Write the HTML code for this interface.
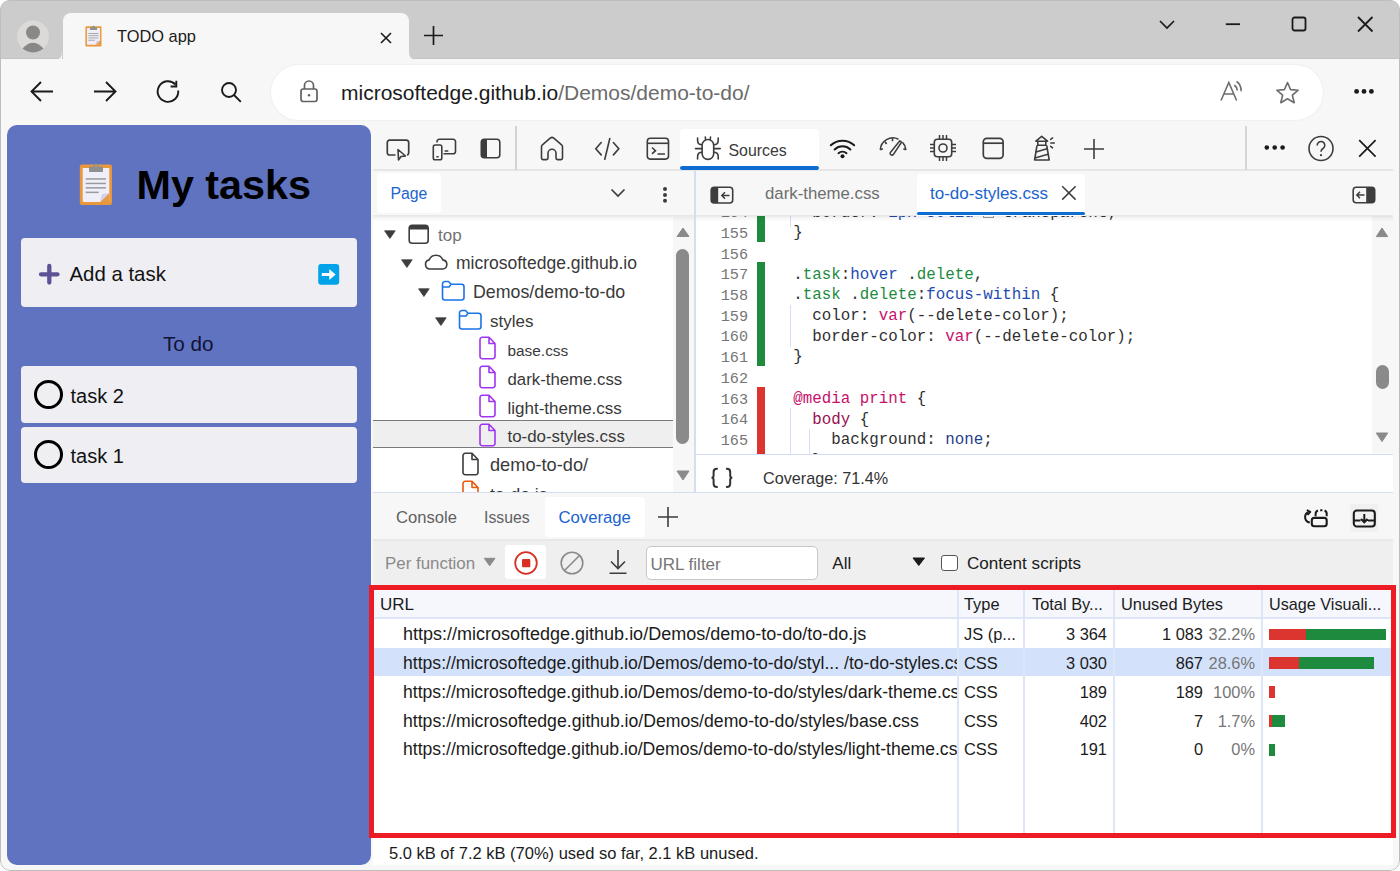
<!DOCTYPE html>
<html><head><meta charset="utf-8">
<style>
*{box-sizing:border-box;margin:0;padding:0}
html,body{width:1400px;height:871px;overflow:hidden;background:#fff;font-family:"Liberation Sans",sans-serif;color:#1b1b1b}
.a{position:absolute;white-space:nowrap}
svg{position:absolute;overflow:visible}
#win{position:absolute;left:0;top:0;width:1400px;height:871px;border-radius:10px;background:#f7f7f7;overflow:hidden}
#frame{position:absolute;left:0;top:0;width:1400px;height:871px;border-radius:10px;border:1px solid #bdbdbd;pointer-events:none}
#titlebar{position:absolute;left:0;top:0;width:1400px;height:59px;background:#cccccc;border-bottom:1px solid #c4c4c4}
#tab{position:absolute;left:62.5px;top:13px;width:346.5px;height:47px;background:#f7f7f7;border-radius:8px 8px 0 0}
#addr{position:absolute;left:271px;top:65px;width:1052px;height:55px;background:#fff;border-radius:28px;box-shadow:0 0 2px rgba(0,0,0,.10)}
#panel{position:absolute;left:7px;top:125px;width:363.5px;height:740px;background:#5f73c1;border-radius:10px}
#dt{position:absolute;left:373px;top:125px;width:1020px;height:740px;background:#fff;overflow:hidden}
.cg{color:#1e8a3e}.cb{color:#1e4bb0}.cm{color:#c8106a}.cd{color:#990f50}.cn{color:#1f3e8c}
.card{position:absolute;left:14px;width:336px;background:#eeeef3;border-radius:4px}
</style></head><body>
<div id="win">
  <div id="titlebar"></div>
  <!-- avatar -->
  <svg style="left:0;top:0" width="60" height="60">
    <circle cx="33" cy="36.6" r="16" fill="#dcdad7"/>
    <circle cx="33" cy="32.5" r="7" fill="#8a8886"/>
    <path d="M22.5 48.5 Q33 37 43.5 48.5 Q38.5 52.6 33 52.6 Q27.5 52.6 22.5 48.5Z" fill="#8a8886"/>
  </svg>
  <div id="tab"></div>
  <!-- tab flares -->
  <svg style="left:54px;top:50px" width="10" height="10"><path d="M0 10 Q8 10 8 2 L8 10Z" fill="#f7f7f7"/></svg>
  <svg style="left:409px;top:50px" width="10" height="10"><path d="M0 2 Q0 10 8 10 L0 10Z" fill="#f7f7f7"/></svg>
  <!-- tab favicon -->
  <svg style="left:84.6px;top:25.1px" width="17" height="22" viewBox="0 0 34 44">
    <rect x="0.8" y="2.6" width="32.2" height="40.3" rx="2.5" fill="#e8983a"/>
    <rect x="3.9" y="6.1" width="26.2" height="33.6" rx="0.8" fill="#f0eef8"/>
    <path d="M30.1 31 L30.1 39.7 L21.2 39.7Z" fill="#e49a48"/>
    <path d="M21.2 39.7 L30.1 31 L23 32.2Z" fill="#d3cfe4"/>
    <rect x="10" y="4.5" width="14" height="5.6" rx="1.2" fill="#8f9090"/>
    <circle cx="17" cy="4" r="2.6" fill="#8f9090"/>
    <rect x="6.7" y="16" width="20.3" height="1.8" fill="#a0a0a0"/>
    <rect x="6.7" y="20.5" width="20.3" height="1.8" fill="#a0a0a0"/>
    <rect x="6.7" y="25" width="20.3" height="1.8" fill="#a0a0a0"/>
    <rect x="6.7" y="29.5" width="13" height="1.8" fill="#a0a0a0"/>
  </svg>
  <div class="a" style="left:117px;top:27.2px;font-size:16.4px;color:#1b1b1b">TODO app</div>
  <svg style="left:380px;top:32px" width="12" height="12"><path d="M1 1 L11 11 M11 1 L1 11" stroke="#1b1b1b" stroke-width="1.6"/></svg>
  <svg style="left:423px;top:25px" width="21" height="21"><path d="M10.5 1 V20 M1 10.5 H20" stroke="#1b1b1b" stroke-width="1.7"/></svg>
  <!-- window controls -->
  <svg style="left:1158.5px;top:19.5px" width="17" height="10"><path d="M1 1 L8 8 L15 1" stroke="#1b1b1b" stroke-width="1.7" fill="none"/></svg>
  <svg style="left:1225px;top:21.5px" width="16" height="4"><path d="M0.8 2.2 H15" stroke="#1b1b1b" stroke-width="1.8"/></svg>
  <svg style="left:1291px;top:16px" width="17" height="17"><rect x="1.5" y="1.5" width="13" height="13" rx="2" stroke="#1b1b1b" stroke-width="1.8" fill="none"/></svg>
  <svg style="left:1357px;top:16px" width="17" height="17"><path d="M1 1 L15.5 15.5 M15.5 1 L1 15.5" stroke="#1b1b1b" stroke-width="1.8"/></svg>

  <!-- nav toolbar -->
  <svg style="left:30px;top:81.3px" width="25" height="22"><path d="M1.5 10.5 H23 M11 1 L1.5 10.5 L11 20" stroke="#1b1b1b" stroke-width="1.9" fill="none"/></svg>
  <svg style="left:91.5px;top:81px" width="25" height="22"><path d="M23.5 10.5 H2 M14 1 L23.5 10.5 L14 20" stroke="#1b1b1b" stroke-width="1.9" fill="none"/></svg>
  <svg style="left:156px;top:80px" width="26" height="26"><path d="M22.2 10.5 A10.3 10.3 0 1 1 19.5 4.5" stroke="#1b1b1b" stroke-width="1.9" fill="none"/><path d="M20.3 0.8 V6.5 H14.6" stroke="#1b1b1b" stroke-width="1.9" fill="none"/></svg>
  <svg style="left:219.5px;top:81px" width="23" height="23"><circle cx="9" cy="9" r="7" stroke="#1b1b1b" stroke-width="1.9" fill="none"/><path d="M14 14 L20.8 20.8" stroke="#1b1b1b" stroke-width="1.9"/></svg>
  <div id="addr"></div>
  <svg style="left:298.5px;top:79px" width="20" height="25"><path d="M5.5 10 V6.5 A4.5 4.5 0 0 1 14.5 6.5 V10" stroke="#616161" stroke-width="1.7" fill="none"/><rect x="2" y="10" width="16" height="12.5" rx="2.2" stroke="#616161" stroke-width="1.7" fill="none"/><circle cx="10" cy="16.2" r="1.2" fill="#616161"/></svg>
  <div class="a" style="left:341px;top:80.8px;font-size:21px;color:#1b1b1b">microsoftedge.github.io<span style="color:#6b6b6b">/Demos/demo-to-do/</span></div>
  <svg style="left:1219px;top:80.2px" width="26" height="24"><path d="M2 20.5 L9.8 2.5 L17.6 20.5 M4.8 14 H14.8" stroke="#6d6d6d" stroke-width="1.6" fill="none"/><path d="M15.3 5 Q18 7 18.3 10.5 M17.5 1.5 Q22.2 4.5 22.2 11.3" stroke="#6d6d6d" stroke-width="1.6" fill="none"/></svg>
  <svg style="left:1275px;top:81px" width="26" height="24"><path d="M12.5 1.5 L15.6 8.6 L23.2 9.2 L17.4 14.2 L19.2 21.7 L12.5 17.7 L5.8 21.7 L7.6 14.2 L1.8 9.2 L9.4 8.6Z" stroke="#6d6d6d" stroke-width="1.6" fill="none" stroke-linejoin="round"/></svg>
  <svg style="left:1352px;top:87px" width="24" height="9"><circle cx="4.6" cy="4.4" r="2.4" fill="#1b1b1b"/><circle cx="12" cy="4.4" r="2.4" fill="#1b1b1b"/><circle cx="19.4" cy="4.4" r="2.4" fill="#1b1b1b"/></svg>

  <!-- page panel -->
  <div id="panel">
    <svg style="left:72px;top:37px" width="34" height="44" viewBox="0 0 34 44">
      <rect x="0.8" y="2.6" width="32.2" height="40.3" rx="2.2" fill="#e8983a"/>
      <rect x="3.7" y="5.9" width="26.6" height="34" rx="0.8" fill="#f0eef8"/>
      <path d="M30.3 31 L30.3 39.9 L21.2 39.9Z" fill="#e49a48"/>
      <path d="M21.2 39.9 L30.3 31 L23 32.2Z" fill="#d3cfe4"/>
      <rect x="10" y="4.5" width="14" height="5.6" rx="1.2" fill="#8f9090"/>
      <circle cx="17" cy="4" r="2.6" fill="#8f9090"/>
      <circle cx="17" cy="4.2" r="1.1" fill="#f0932e"/>
      <rect x="6.7" y="16.2" width="20.3" height="1.5" fill="#9b9b9b"/>
      <rect x="6.7" y="20.7" width="20.3" height="1.5" fill="#9b9b9b"/>
      <rect x="6.7" y="25.1" width="20.3" height="1.5" fill="#9b9b9b"/>
      <rect x="6.7" y="29.6" width="13" height="1.5" fill="#9b9b9b"/>
    </svg>
    <div class="a" style="left:129.5px;top:36.5px;font-size:41.3px;font-weight:bold;color:#000">My tasks</div>
    <div class="card" style="top:113px;height:69px">
      <svg style="left:18px;top:26px" width="21" height="21"><path d="M10.3 2 V18.5 M2 10.3 H18.5" stroke="#5e5296" stroke-width="4.3" stroke-linecap="round"/></svg>
      <div class="a" style="left:48.5px;top:25px;font-size:20.4px;color:#111">Add a task</div>
      <svg style="left:297px;top:26px" width="22" height="21"><rect x="0.2" y="0" width="21" height="20.8" rx="3" fill="#03a3e9"/><path d="M3.8 10.5 H13" stroke="#fff" stroke-width="3" /><path d="M11.6 5.7 L17.3 10.5 L11.6 15.4Z" fill="#fff" stroke="#fff" stroke-width="0.6" stroke-linejoin="round"/></svg>
    </div>
    <div class="a" style="left:156px;top:207px;font-size:20.7px;color:#121233">To do</div>
    <div class="card" style="top:241px;height:57px">
      <svg style="left:13px;top:14px" width="30" height="30"><circle cx="14.5" cy="14.5" r="13" stroke="#000" stroke-width="3" fill="none"/></svg>
      <div class="a" style="left:49.5px;top:19px;font-size:20px;color:#111">task 2</div>
    </div>
    <div class="card" style="top:302px;height:56px">
      <svg style="left:13px;top:13px" width="30" height="30"><circle cx="14.5" cy="14.5" r="13" stroke="#000" stroke-width="3" fill="none"/></svg>
      <div class="a" style="left:49.5px;top:18px;font-size:20px;color:#111">task 1</div>
    </div>
  </div>

  <!-- devtools -->
  <div id="dt"></div>
  <!-- devtools main toolbar -->
  <div class="a" style="left:373px;top:125px;width:1020px;height:46px;background:#f7f7f7;border-bottom:2px solid #e6e6e6"></div>
  <div class="a" style="left:515px;top:126px;width:2px;height:44px;background:#d3d3d3"></div>
  <div class="a" style="left:1245px;top:126px;width:2px;height:44px;background:#d6d6d6"></div>
  <div class="a" style="left:680px;top:129px;width:139px;height:41px;background:#fff;border-radius:4px 4px 0 0"></div>
  <div class="a" style="left:680px;top:165.5px;width:139px;height:4px;background:#0f6cd0;border-radius:2px"></div>
  <!-- inspect -->
  <svg style="left:385.8px;top:139.3px" width="26" height="23"><path d="M9.5 16 H3.5 A2.2 2.2 0 0 1 1.3 13.8 V3.4 A2.2 2.2 0 0 1 3.5 1.2 H20.5 A2.2 2.2 0 0 1 22.7 3.4 V13.8 A2.2 2.2 0 0 1 21 16" stroke="#3d3d3d" stroke-width="1.7" fill="none"/><path d="M12 10.5 L12.5 21 L15 17.5 L19.5 17 Z" stroke="#3d3d3d" stroke-width="1.6" fill="none" stroke-linejoin="round"/></svg>
  <!-- device -->
  <svg style="left:431.7px;top:137.9px" width="25" height="23"><path d="M5 4.5 V3.5 A2.2 2.2 0 0 1 7.2 1.3 H21.3 A2.2 2.2 0 0 1 23.5 3.5 V13.6 A2.2 2.2 0 0 1 21.3 15.8 H11.5" stroke="#3d3d3d" stroke-width="1.6" fill="none"/><rect x="1.3" y="7" width="8.5" height="14.8" rx="1.8" stroke="#3d3d3d" stroke-width="1.6" fill="none"/><path d="M4.4 18.8 H6.7 M12.6 13 H16.3" stroke="#3d3d3d" stroke-width="1.6"/></svg>
  <!-- dock -->
  <svg style="left:479.5px;top:137.9px" width="22" height="22"><rect x="1.3" y="1.3" width="18.5" height="18.5" rx="3" stroke="#3d3d3d" stroke-width="1.6" fill="none"/><path d="M1.3 4.3 A3 3 0 0 1 4.3 1.3 H7 V19.8 H4.3 A3 3 0 0 1 1.3 16.8Z" fill="#3d3d3d"/></svg>
  <!-- home -->
  <svg style="left:539.7px;top:135.5px" width="26" height="26"><path d="M3 23.6 A1.5 1.5 0 0 1 1.5 22.1 V10.8 A2.5 2.5 0 0 1 2.4 8.8 L10.5 2 A2.5 2.5 0 0 1 13.5 2 L21.6 8.8 A2.5 2.5 0 0 1 22.5 10.8 V22.1 A1.5 1.5 0 0 1 21 23.6 H17.5 A1.5 1.5 0 0 1 16 22.1 V17.3 A4 4 0 0 0 8 17.3 V22.1 A1.5 1.5 0 0 1 6.5 23.6Z" stroke="#3d3d3d" stroke-width="1.6" fill="none"/></svg>
  <!-- elements -->
  <svg style="left:593.5px;top:137px" width="28" height="24"><path d="M7.2 5.5 L1.8 11.7 L7.2 17.9 M19.4 5.5 L24.8 11.7 L19.4 17.9 M15.8 1.5 L10.8 22.2" stroke="#3d3d3d" stroke-width="1.6" fill="none" stroke-linecap="round"/></svg>
  <!-- console -->
  <svg style="left:645.6px;top:137.2px" width="25" height="24"><rect x="1.3" y="1.3" width="21.2" height="20.8" rx="3" stroke="#3d3d3d" stroke-width="1.6" fill="none"/><path d="M1.3 6.3 H22.5" stroke="#3d3d3d" stroke-width="1.6"/><path d="M6 10.5 L9.5 13.7 L6 16.9 M11.5 17 H19" stroke="#3d3d3d" stroke-width="1.6" fill="none"/></svg>
  <!-- sources bug -->
  <svg style="left:694px;top:135px" width="28" height="27"><rect x="8.1" y="4.5" width="11.6" height="19.9" rx="5.8" stroke="#3d3d3d" stroke-width="1.6" fill="none"/><path d="M11.6 4.8 L11.3 2 M16.2 4.8 L16.5 2 M8.1 9.8 Q3.6 9.8 3.6 5.5 V3 M19.7 9.8 Q24.2 9.8 24.2 5.5 V3 M1.5 13.6 H8.1 M19.7 13.6 H26.2 M8.1 17.3 Q3.6 17.3 3.6 21.5 V24 M19.7 17.3 Q24.2 17.3 24.2 21.5 V24" stroke="#3d3d3d" stroke-width="1.6" fill="none" stroke-linecap="round"/></svg>
  <div class="a" style="left:728.5px;top:141.5px;font-size:15.9px;color:#3b3b3b">Sources</div>
  <!-- network wifi -->
  <svg style="left:829px;top:136.8px" width="28" height="22"><path d="M1.8 8.3 A17 17 0 0 1 25.2 8.3 M5.6 12.5 A11.5 11.5 0 0 1 21.4 12.5 M9.5 16.2 A6 6 0 0 1 17.5 16.2" stroke="#1b1b1b" stroke-width="2" fill="none" stroke-linecap="round"/><circle cx="13.5" cy="19.2" r="2" fill="#1b1b1b"/></svg>
  <!-- performance -->
  <svg style="left:879px;top:137px" width="30" height="21"><path d="M1.3 12.8 A12.6 12.6 0 0 1 19.5 2.2 M23.5 5.2 A12.6 12.6 0 0 1 26.9 12.8" stroke="#3d3d3d" stroke-width="1.6" fill="none"/><path d="M1.3 12.8 L3.8 11.8 M13.5 1.2 V4.2 M6 4.8 L7.6 7 M26.9 12.8 L24.4 11.8" stroke="#3d3d3d" stroke-width="1.6" fill="none"/><path d="M20.8 3.8 L22.6 5 L14.3 17.6 A1.9 1.9 0 0 1 11.2 15.7Z" stroke="#3d3d3d" stroke-width="1.5" fill="none" stroke-linejoin="round"/></svg>
  <!-- memory -->
  <svg style="left:928.5px;top:134px" width="28" height="28"><rect x="5.3" y="5.3" width="17.4" height="17.4" rx="3" stroke="#3d3d3d" stroke-width="1.6" fill="none"/><circle cx="14" cy="14" r="4" stroke="#3d3d3d" stroke-width="1.6" fill="none"/><path d="M10.5 1 V5 M14 1 V5 M17.5 1 V5 M10.5 23 V27 M14 23 V27 M17.5 23 V27 M1 10.5 H5 M1 14 H5 M1 17.5 H5 M23 10.5 H27 M23 14 H27 M23 17.5 H27" stroke="#3d3d3d" stroke-width="1.5"/></svg>
  <!-- application -->
  <svg style="left:982px;top:137.1px" width="24" height="24"><rect x="1.3" y="1.3" width="19.8" height="20" rx="3.5" stroke="#3d3d3d" stroke-width="1.7" fill="none"/><path d="M1.3 6.2 H21.1" stroke="#3d3d3d" stroke-width="1.7"/></svg>
  <!-- lighthouse -->
  <svg style="left:1032px;top:134.2px" width="24" height="28"><path d="M3.9 7.2 L9.7 2.3 L15.5 7.2Z M5.8 7.2 V11.3 H13.8 V7.2 M5 11.3 L2.6 26 H17.2 L14.7 11.3" stroke="#3d3d3d" stroke-width="1.6" fill="none" stroke-linejoin="round"/><path d="M4 18 L15.8 14.6 M3 24 L16.8 20" stroke="#3d3d3d" stroke-width="1.6"/><path d="M18.6 5.4 L20.6 3.9 M18.8 9 H22.3 M18.6 12.3 L20.6 13.9" stroke="#3d3d3d" stroke-width="1.5" stroke-linecap="round"/></svg>
  <!-- plus -->
  <svg style="left:1083px;top:138px" width="22" height="22"><path d="M11 1 V21 M1 11 H21" stroke="#3d3d3d" stroke-width="1.6"/></svg>
  <!-- more -->
  <svg style="left:1262.5px;top:144.2px" width="24" height="8"><circle cx="3.8" cy="3.5" r="2.3" fill="#1b1b1b"/><circle cx="11.7" cy="3.5" r="2.3" fill="#1b1b1b"/><circle cx="19.6" cy="3.5" r="2.3" fill="#1b1b1b"/></svg>
  <!-- help -->
  <svg style="left:1307.2px;top:135.3px" width="28" height="28"><circle cx="14" cy="13.5" r="12" stroke="#3d3d3d" stroke-width="1.6" fill="none"/><path d="M10.2 10.5 A3.8 3.8 0 1 1 16.3 13.3 Q14 14.5 14 16.8" stroke="#3d3d3d" stroke-width="1.6" fill="none"/><circle cx="14" cy="20.2" r="1.1" fill="#3d3d3d"/></svg>
  <!-- close -->
  <svg style="left:1358px;top:139px" width="20" height="20"><path d="M1.2 1.2 L17.6 17.6 M17.6 1.2 L1.2 17.6" stroke="#1b1b1b" stroke-width="1.7"/></svg>

  <!-- sources sub tab rows -->
  <div class="a" style="left:373px;top:171px;width:1020px;height:45px;background:#f7f7f7;border-bottom:1px solid #e8e8e8"></div>
  <div class="a" style="left:376.5px;top:173px;width:64px;height:40px;background:#fff;border-radius:4px"></div>
  <div class="a" style="left:390.5px;top:184.5px;font-size:15.8px;color:#1a63d0">Page</div>
  <svg style="left:610px;top:188px" width="16" height="10"><path d="M1.5 1.5 L8 8 L14.5 1.5" stroke="#3d3d3d" stroke-width="1.7" fill="none"/></svg>
  <svg style="left:662px;top:186px" width="6" height="20"><circle cx="3" cy="3.1" r="2" fill="#3d3d3d"/><circle cx="3" cy="8.9" r="2" fill="#3d3d3d"/><circle cx="3" cy="14.7" r="2" fill="#3d3d3d"/></svg>
  
  <svg style="left:709.7px;top:185.7px" width="26" height="20"><rect x="1.2" y="1.2" width="21.5" height="15.8" rx="3" stroke="#3d3d3d" stroke-width="1.6" fill="none"/><path d="M1.2 4.2 A3 3 0 0 1 4.2 1.2 H8.2 V17 H4.2 A3 3 0 0 1 1.2 14Z" fill="#3d3d3d"/><path d="M19.5 9.5 H12 M15 6.3 L11.8 9.5 L15 12.7" stroke="#3d3d3d" stroke-width="1.5" fill="none"/></svg>
  <div class="a" style="left:765px;top:184px;font-size:16.8px;color:#6e6e6e">dark-theme.css</div>
  <div class="a" style="left:917px;top:174px;width:168px;height:42px;background:#fff;border-radius:4px 4px 0 0"></div>
  <div class="a" style="left:917px;top:211.5px;width:168px;height:3.5px;background:#0f6cd0;border-radius:2px"></div>
  <div class="a" style="left:930px;top:184px;font-size:17px;color:#1a63d0">to-do-styles.css</div>
  <svg style="left:1061px;top:185px" width="17" height="17"><path d="M1.2 1.2 L14.6 14.6 M14.6 1.2 L1.2 14.6" stroke="#3d3d3d" stroke-width="1.5"/></svg>
  <svg style="left:1352px;top:185.5px" width="26" height="20"><rect x="1.2" y="1.2" width="21.5" height="15.5" rx="3" stroke="#3d3d3d" stroke-width="1.6" fill="none"/><path d="M22.7 4.2 A3 3 0 0 0 19.7 1.2 H14.2 V16.7 H19.7 A3 3 0 0 0 22.7 13.7Z" fill="#3d3d3d"/><path d="M12.5 9 H5 M8 5.8 L4.8 9 L8 12.2" stroke="#3d3d3d" stroke-width="1.5" fill="none"/></svg>
  <!-- TREE -->
  <div class="a" style="left:373px;top:217px;width:322px;height:275px;overflow:hidden">
    <div class="a" style="left:0;top:203px;width:299.5px;height:28px;background:#efefef;border-top:1px solid #7a7a7a;border-bottom:1px solid #7a7a7a"></div>
    <!-- row: top -->
    <svg style="left:10.5px;top:13px" width="13" height="10"><path d="M0.6 0.8 H11.2 L5.9 8.5Z" fill="#3d3d3d" stroke="#3d3d3d" stroke-width="0.8" stroke-linejoin="round"/></svg>
    <svg style="left:34.7px;top:6.7px" width="22" height="21"><rect x="1.2" y="1.2" width="19" height="18" rx="3" stroke="#3d3d3d" stroke-width="1.6" fill="none"/><path d="M1.2 4.2 A3 3 0 0 1 4.2 1.2 H17.2 A3 3 0 0 1 20.2 4.2 V5.5 H1.2Z" fill="#3d3d3d"/></svg>
    <div class="a" style="left:65px;top:8.5px;font-size:17px;color:#737373">top</div>
    <!-- row: microsoftedge -->
    <svg style="left:27.5px;top:42px" width="13" height="10"><path d="M0.6 0.8 H11.2 L5.9 8.5Z" fill="#3d3d3d" stroke="#3d3d3d" stroke-width="0.8" stroke-linejoin="round"/></svg>
    <svg style="left:50.5px;top:36px" width="25" height="18"><path d="M6 16 A4.6 4.6 0 0 1 5.2 6.9 A7.3 7.3 0 0 1 18.8 6.9 A4.6 4.6 0 0 1 19 16Z" stroke="#3d3d3d" stroke-width="1.6" fill="none" stroke-linejoin="round"/></svg>
    <div class="a" style="left:83px;top:36px;font-size:17.5px;color:#393939">microsoftedge.github.io</div>
    <!-- row: Demos -->
    <svg style="left:44.5px;top:71px" width="13" height="10"><path d="M0.6 0.8 H11.2 L5.9 8.5Z" fill="#3d3d3d" stroke="#3d3d3d" stroke-width="0.8" stroke-linejoin="round"/></svg>
    <svg style="left:67.5px;top:63px" width="25" height="22"><path d="M1.5 4 A2.5 2.5 0 0 1 4 1.5 H7.5 L10 4.3 H20.5 A2.5 2.5 0 0 1 23 6.8 V17.5 A2.5 2.5 0 0 1 20.5 20 H4 A2.5 2.5 0 0 1 1.5 17.5Z M1.5 7 H8 L10 4.3" stroke="#1a73e8" stroke-width="1.6" fill="none" stroke-linejoin="round"/></svg>
    <div class="a" style="left:100px;top:65px;font-size:17.8px;color:#393939">Demos/demo-to-do</div>
    <!-- row: styles -->
    <svg style="left:61.5px;top:100px" width="13" height="10"><path d="M0.6 0.8 H11.2 L5.9 8.5Z" fill="#3d3d3d" stroke="#3d3d3d" stroke-width="0.8" stroke-linejoin="round"/></svg>
    <svg style="left:84.5px;top:92px" width="25" height="22"><path d="M1.5 4 A2.5 2.5 0 0 1 4 1.5 H7.5 L10 4.3 H20.5 A2.5 2.5 0 0 1 23 6.8 V17.5 A2.5 2.5 0 0 1 20.5 20 H4 A2.5 2.5 0 0 1 1.5 17.5Z M1.5 7 H8 L10 4.3" stroke="#1a73e8" stroke-width="1.6" fill="none" stroke-linejoin="round"/></svg>
    <div class="a" style="left:117px;top:94.5px;font-size:17px;color:#393939">styles</div>
    <!-- css files -->
    <svg style="left:105px;top:119px" width="19" height="24"><path d="M2 3.5 A2.2 2.2 0 0 1 4.2 1.3 H11 L17 7.5 V20.5 A2.2 2.2 0 0 1 14.8 22.7 H4.2 A2.2 2.2 0 0 1 2 20.5Z M11 1.3 V7.5 H17" stroke="#a035f0" stroke-width="1.6" fill="none" stroke-linejoin="round"/></svg>
    <div class="a" style="left:134.5px;top:125px;font-size:15.4px;color:#393939">base.css</div>
    <svg style="left:105px;top:148px" width="19" height="24"><path d="M2 3.5 A2.2 2.2 0 0 1 4.2 1.3 H11 L17 7.5 V20.5 A2.2 2.2 0 0 1 14.8 22.7 H4.2 A2.2 2.2 0 0 1 2 20.5Z M11 1.3 V7.5 H17" stroke="#a035f0" stroke-width="1.6" fill="none" stroke-linejoin="round"/></svg>
    <div class="a" style="left:134.5px;top:152.7px;font-size:16.8px;color:#393939">dark-theme.css</div>
    <svg style="left:105px;top:177px" width="19" height="24"><path d="M2 3.5 A2.2 2.2 0 0 1 4.2 1.3 H11 L17 7.5 V20.5 A2.2 2.2 0 0 1 14.8 22.7 H4.2 A2.2 2.2 0 0 1 2 20.5Z M11 1.3 V7.5 H17" stroke="#a035f0" stroke-width="1.6" fill="none" stroke-linejoin="round"/></svg>
    <div class="a" style="left:134.5px;top:181.7px;font-size:17px;color:#393939">light-theme.css</div>
    <svg style="left:105px;top:206px" width="19" height="24"><path d="M2 3.5 A2.2 2.2 0 0 1 4.2 1.3 H11 L17 7.5 V20.5 A2.2 2.2 0 0 1 14.8 22.7 H4.2 A2.2 2.2 0 0 1 2 20.5Z M11 1.3 V7.5 H17" stroke="#a035f0" stroke-width="1.6" fill="none" stroke-linejoin="round"/></svg>
    <div class="a" style="left:134.5px;top:210.4px;font-size:16.9px;color:#393939">to-do-styles.css</div>
    <svg style="left:88px;top:235px" width="19" height="24"><path d="M2 3.5 A2.2 2.2 0 0 1 4.2 1.3 H11 L17 7.5 V20.5 A2.2 2.2 0 0 1 14.8 22.7 H4.2 A2.2 2.2 0 0 1 2 20.5Z M11 1.3 V7.5 H17" stroke="#3d3d3d" stroke-width="1.6" fill="none" stroke-linejoin="round"/></svg>
    <div class="a" style="left:117px;top:238px;font-size:18.2px;color:#393939">demo-to-do/</div>
    <svg style="left:88px;top:263px" width="19" height="24"><path d="M2 3.5 A2.2 2.2 0 0 1 4.2 1.3 H11 L17 7.5 V20.5 A2.2 2.2 0 0 1 14.8 22.7 H4.2 A2.2 2.2 0 0 1 2 20.5Z M11 1.3 V7.5 H17" stroke="#e8590c" stroke-width="1.6" fill="none" stroke-linejoin="round"/></svg>
    <div class="a" style="left:117px;top:267.5px;font-size:17.5px;color:#393939">to-do.js</div>
    <!-- scrollbar -->
    <div class="a" style="left:299.5px;top:0;width:21px;height:275px;background:#f7f7f7"></div>
    <svg style="left:303px;top:10px" width="14" height="11"><path d="M1 9.5 L7 1 L13 9.5Z" fill="#8a8a8a" stroke="#8a8a8a" stroke-width="1" stroke-linejoin="round"/></svg>
    <div class="a" style="left:303px;top:32px;width:13px;height:195px;background:#8a8a8a;border-radius:6.5px"></div>
    <svg style="left:303px;top:253px" width="14" height="11"><path d="M1 1 L7 10 L13 1Z" fill="#8a8a8a" stroke="#8a8a8a" stroke-width="1" stroke-linejoin="round"/></svg>
  </div>
  <div class="a" style="left:373px;top:492px;width:1020px;height:1px;background:#d5ddf2"></div>
  <!-- EDITOR -->
  <div class="a" style="left:696px;top:216px;width:697px;height:238px;overflow:hidden;background:#fff">
    <div class="a" id="lnums" style="left:0;top:-12.8px;width:52px;text-align:right;font-family:'Liberation Mono',monospace;font-size:15.2px;line-height:20.7px;color:#767676">154<br>155<br>156<br>157<br>158<br>159<br>160<br>161<br>162<br>163<br>164<br>165<br>166</div>
    <div class="a" style="left:60.5px;top:0;width:8px;height:25.5px;background:#1e8a3e"></div>
    <div class="a" style="left:60.5px;top:46px;width:8px;height:103.5px;background:#1e8a3e"></div>
    <div class="a" style="left:60.5px;top:171px;width:8px;height:80px;background:#dc3530"></div>
    <div class="a" style="left:94px;top:0;width:1px;height:10.5px;background:#d4def5"></div>
    <div class="a" style="left:94px;top:88.5px;width:1px;height:42px;background:#d4def5"></div>
    <div class="a" style="left:94px;top:191.5px;width:1px;height:60px;background:#d4def5"></div>
    <div class="a" style="left:113px;top:212.5px;width:1px;height:25px;background:#d4def5"></div>
    <pre class="a" id="code" style="white-space:pre;left:97.2px;top:-13.5px;font-family:'Liberation Mono',monospace;font-size:15.83px;line-height:20.7px;color:#303030">  border: <span class="cb">1px solid</span> <span style="display:inline-block;width:11px;height:11px;border:1px solid #9a9a9a;vertical-align:-1px;margin-right:-1px"></span> transparent;
}

.<span class="cg">task</span>:<span class="cb">hover</span> .<span class="cg">delete</span>,
.<span class="cg">task</span> .<span class="cg">delete</span>:<span class="cb">focus-within</span> {
  color: <span class="cm">var</span>(--delete-color);
  border-color: <span class="cm">var</span>(--delete-color);
}

<span class="cm">@media print</span> {
  <span class="cd">body</span> {
    background: <span class="cn">none</span>;
  }</pre>
    <div class="a" style="left:675.5px;top:0;width:21.5px;height:238px;background:#f7f7f7"></div>
    <svg style="left:679px;top:11px" width="14" height="11"><path d="M1.3 9.6 L7 1 L12.7 9.6Z" fill="#8a8a8a" stroke="#8a8a8a" stroke-width="1" stroke-linejoin="round"/></svg>
    <div class="a" style="left:679.8px;top:149px;width:13px;height:24px;background:#8a8a8a;border-radius:6.5px"></div>
    <svg style="left:679px;top:215.5px" width="14" height="11"><path d="M1.3 1 L7 9.6 L12.7 1Z" fill="#8a8a8a" stroke="#8a8a8a" stroke-width="1" stroke-linejoin="round"/></svg>
  </div>
  <div class="a" style="left:695px;top:453.5px;width:698px;height:1.5px;background:#d5ddf2"></div>
  <svg style="left:708px;top:466px" width="28" height="24"><path d="M9 2.8 Q5.6 2.8 5.6 6 V9.8 Q5.6 11.6 3.6 11.8 Q5.6 12 5.6 13.8 V17.8 Q5.6 21 9 21" stroke="#333" stroke-width="2" fill="none" stroke-linecap="round"/><path d="M18.8 2.8 Q22.2 2.8 22.2 6 V9.8 Q22.2 11.6 24.2 11.8 Q22.2 12 22.2 13.8 V17.8 Q22.2 21 18.8 21" stroke="#333" stroke-width="2" fill="none" stroke-linecap="round"/></svg>
  <div class="a" style="left:763px;top:469px;font-size:16.2px;color:#333">Coverage: 71.4%</div
  ><!-- DRAWER -->
  <div class="a" style="left:373px;top:215.5px;width:1020px;height:6px;background:linear-gradient(rgba(0,0,0,.085),rgba(0,0,0,.03) 40%,rgba(0,0,0,0))"></div>
  <div class="a" style="left:694px;top:171px;width:2px;height:322px;background:#d3ddf3"></div>
  <!-- drawer tabs -->
  <div class="a" style="left:373px;top:493px;width:1020px;height:48px;background:#f7f7f7;border-bottom:2px solid #e8e8e8"></div>
  <div class="a" style="left:396px;top:508px;font-size:16.6px;color:#616161">Console</div>
  <div class="a" style="left:484px;top:508.5px;font-size:15.8px;color:#616161">Issues</div>
  <div class="a" style="left:544.5px;top:496.5px;width:100.5px;height:40px;background:#fff;border-radius:4px"></div>
  <div class="a" style="left:558.5px;top:508px;font-size:16.7px;color:#1a63d0">Coverage</div>
  <svg style="left:656.5px;top:506px" width="22" height="22"><path d="M11 1 V21 M1 11 H21" stroke="#3d3d3d" stroke-width="1.6"/></svg>
  <svg style="left:1300px;top:506px" width="30" height="24"><path d="M9.8 16.5 A5.3 5.3 0 0 1 8.5 6.3" stroke="#1b1b1b" stroke-width="2" fill="none"/><path d="M6.8 4.2 L10.3 5.9 L7.6 9" stroke="#1b1b1b" stroke-width="1.9" fill="none" stroke-linejoin="round"/><rect x="11.8" y="11.9" width="14.9" height="8.4" rx="2.5" stroke="#1b1b1b" stroke-width="2.1" fill="none"/><path d="M15.6 10.2 V8 A3.6 3.6 0 0 1 18 4.5 M20.2 4.3 H22.4 M24.6 4.5 A3.6 3.6 0 0 1 26.7 8 V10.2" stroke="#1b1b1b" stroke-width="2" fill="none"/></svg>
  <div class="a" style="left:1350px;top:504px;width:28px;height:28px;background:#f0f0f0;border-radius:3px"></div><svg style="left:1351px;top:508px" width="26" height="20"><rect x="2.8" y="2.5" width="21" height="16" rx="3" stroke="#1b1b1b" stroke-width="2.1" fill="none"/><path d="M2.8 12.5 H9.5 M17 12.5 H23.8 M13.3 6 V14 M10 11 L13.3 14.3 L16.6 11" stroke="#1b1b1b" stroke-width="2" fill="none"/></svg>
  <!-- coverage toolbar -->
  <div class="a" style="left:373px;top:541px;width:1020px;height:45px;background:#efefef"></div>
  <div class="a" style="left:385px;top:554px;font-size:16.9px;color:#8a8a8a">Per function</div>
  <svg style="left:483px;top:556.5px" width="14" height="10"><path d="M1.3 1.3 H12 L6.65 8.8Z" fill="#8a8a8a" stroke="#8a8a8a" stroke-width="1" stroke-linejoin="round"/></svg>
  <div class="a" style="left:505px;top:545px;width:40.5px;height:34px;background:#fff;border-radius:3px"></div>
  <svg style="left:513.3px;top:549.5px" width="26" height="26"><circle cx="13" cy="13" r="10.8" stroke="#d93025" stroke-width="1.8" fill="none"/><rect x="9" y="9" width="8.3" height="8.3" rx="1" fill="#d93025"/></svg>
  <svg style="left:559.3px;top:549.5px" width="26" height="26"><circle cx="13" cy="13" r="10.8" stroke="#8a8a8a" stroke-width="1.6" fill="none"/><path d="M5.5 20.5 L20.5 5.5" stroke="#8a8a8a" stroke-width="1.6"/></svg>
  <svg style="left:608px;top:549px" width="20" height="26"><path d="M10 1 V19.5 M3 12.5 L10 19.5 L17 12.5 M1.5 24.3 H18.5" stroke="#3d3d3d" stroke-width="1.6" fill="none"/></svg>
  <div class="a" style="left:645.5px;top:545.5px;width:172px;height:34px;background:#fff;border:1px solid #c6c6c6;border-radius:5px"></div>
  <div class="a" style="left:650.5px;top:554.5px;font-size:17px;color:#767676">URL filter</div>
  <div class="a" style="left:832.3px;top:554px;font-size:17px;color:#1b1b1b">All</div>
  <svg style="left:911.5px;top:556.5px" width="15" height="10"><path d="M1 1 H12.5 L6.75 8.5Z" fill="#1b1b1b" stroke="#1b1b1b" stroke-width="1" stroke-linejoin="round"/></svg>
  <div class="a" style="left:941px;top:555px;width:17px;height:16px;border:1.5px solid #555;border-radius:3px;background:#fff"></div>
  <div class="a" style="left:967px;top:554px;font-size:17.1px;color:#1b1b1b">Content scripts</div>
  <!-- table -->
  <div class="a" style="left:374px;top:590px;width:1017px;height:243px;background:#fff"></div>
  <div class="a" style="left:374px;top:590px;width:1017px;height:27px;background:#f5f7fc"></div>
  <div class="a" style="left:374px;top:617px;width:1017px;height:2px;background:#dde6f7"></div>
  <div class="a" style="left:374px;top:648px;width:1017px;height:28px;background:#d3e2fa"></div>
  <div class="a" style="left:957px;top:590px;width:2px;height:243px;background:#dde6f7"></div>
  <div class="a" style="left:1023px;top:590px;width:2px;height:243px;background:#dde6f7"></div>
  <div class="a" style="left:1113px;top:590px;width:2px;height:243px;background:#dde6f7"></div>
  <div class="a" style="left:1261px;top:590px;width:2px;height:243px;background:#dde6f7"></div>
  <div class="a" style="left:380px;top:595px;font-size:17px;color:#1b1b1b">URL</div>
  <div class="a" style="left:964px;top:595px;font-size:16.4px;color:#1b1b1b">Type</div>
  <div class="a" style="left:1032px;top:595px;font-size:16.4px;color:#1b1b1b">Total By...</div>
  <div class="a" style="left:1121px;top:595px;font-size:16.4px;color:#1b1b1b">Unused Bytes</div>
  <div class="a" style="left:1269px;top:595px;font-size:16.2px;color:#1b1b1b">Usage Visuali...</div>
  <div class="a" style="left:403px;top:620px;width:554px;height:150px;overflow:hidden;color:#1b1b1b"><div class="a" style="left:0;top:0.00px;font-size:18.0px;line-height:28.85px">https://microsoftedge.github.io/Demos/demo-to-do/to-do.js</div><div class="a" style="left:0;top:28.85px;font-size:17.6px;line-height:28.85px">https://microsoftedge.github.io/Demos/demo-to-do/styl... /to-do-styles.css</div><div class="a" style="left:0;top:57.70px;font-size:17.6px;line-height:28.85px">https://microsoftedge.github.io/Demos/demo-to-do/styles/dark-theme.css</div><div class="a" style="left:0;top:86.55px;font-size:17.65px;line-height:28.85px">https://microsoftedge.github.io/Demos/demo-to-do/styles/base.css</div><div class="a" style="left:0;top:115.40px;font-size:17.6px;line-height:28.85px">https://microsoftedge.github.io/Demos/demo-to-do/styles/light-theme.css</div></div>
  <div class="a" style="left:964px;top:620px;font-size:16.4px;line-height:28.85px;color:#1b1b1b">JS (p...<br>CSS<br>CSS<br>CSS<br>CSS</div>
  <div class="a" style="left:1007px;top:620px;width:100px;text-align:right;font-size:16.4px;line-height:28.85px;color:#1b1b1b">3 364<br>3 030<br>189<br>402<br>191</div>
  <div class="a" style="left:1103px;top:620px;width:100px;text-align:right;font-size:16.4px;line-height:28.85px;color:#1b1b1b">1 083<br>867<br>189<br>7<br>0</div>
  <div class="a" style="left:1155px;top:620px;width:100px;text-align:right;font-size:16.4px;line-height:28.85px;color:#767676">32.2%<br>28.6%<br>100%<br>1.7%<br>0%</div>
  <div class="a" style="left:1269px;top:629px;width:37px;height:11px;background:#dc3530"></div>
  <div class="a" style="left:1306px;top:629px;width:80px;height:11px;background:#1e8a3e"></div>
  <div class="a" style="left:1269px;top:657px;width:30px;height:11.5px;background:#dc3530"></div>
  <div class="a" style="left:1299px;top:657px;width:75px;height:11.5px;background:#1e8a3e"></div>
  <div class="a" style="left:1269px;top:686px;width:6px;height:11.5px;background:#dc3530"></div>
  <div class="a" style="left:1269px;top:715px;width:3px;height:11.5px;background:#dc3530"></div>
  <div class="a" style="left:1272px;top:715px;width:13px;height:11.5px;background:#1e8a3e"></div>
  <div class="a" style="left:1269px;top:744px;width:6px;height:11.5px;background:#1e8a3e"></div>
  <!-- red highlight box -->
  <div class="a" style="left:369px;top:585px;width:1027px;height:253px;border:5px solid #ed1c24"></div>
  <!-- status -->
  <div class="a" style="left:374px;top:838px;width:1019px;height:27px;background:#fff"></div>
  <div class="a" style="left:389px;top:844px;font-size:16.5px;color:#1b1b1b">5.0 kB of 7.2 kB (70%) used so far, 2.1 kB unused.</div>
  <div id="frame"></div>
</div>
</body></html>
